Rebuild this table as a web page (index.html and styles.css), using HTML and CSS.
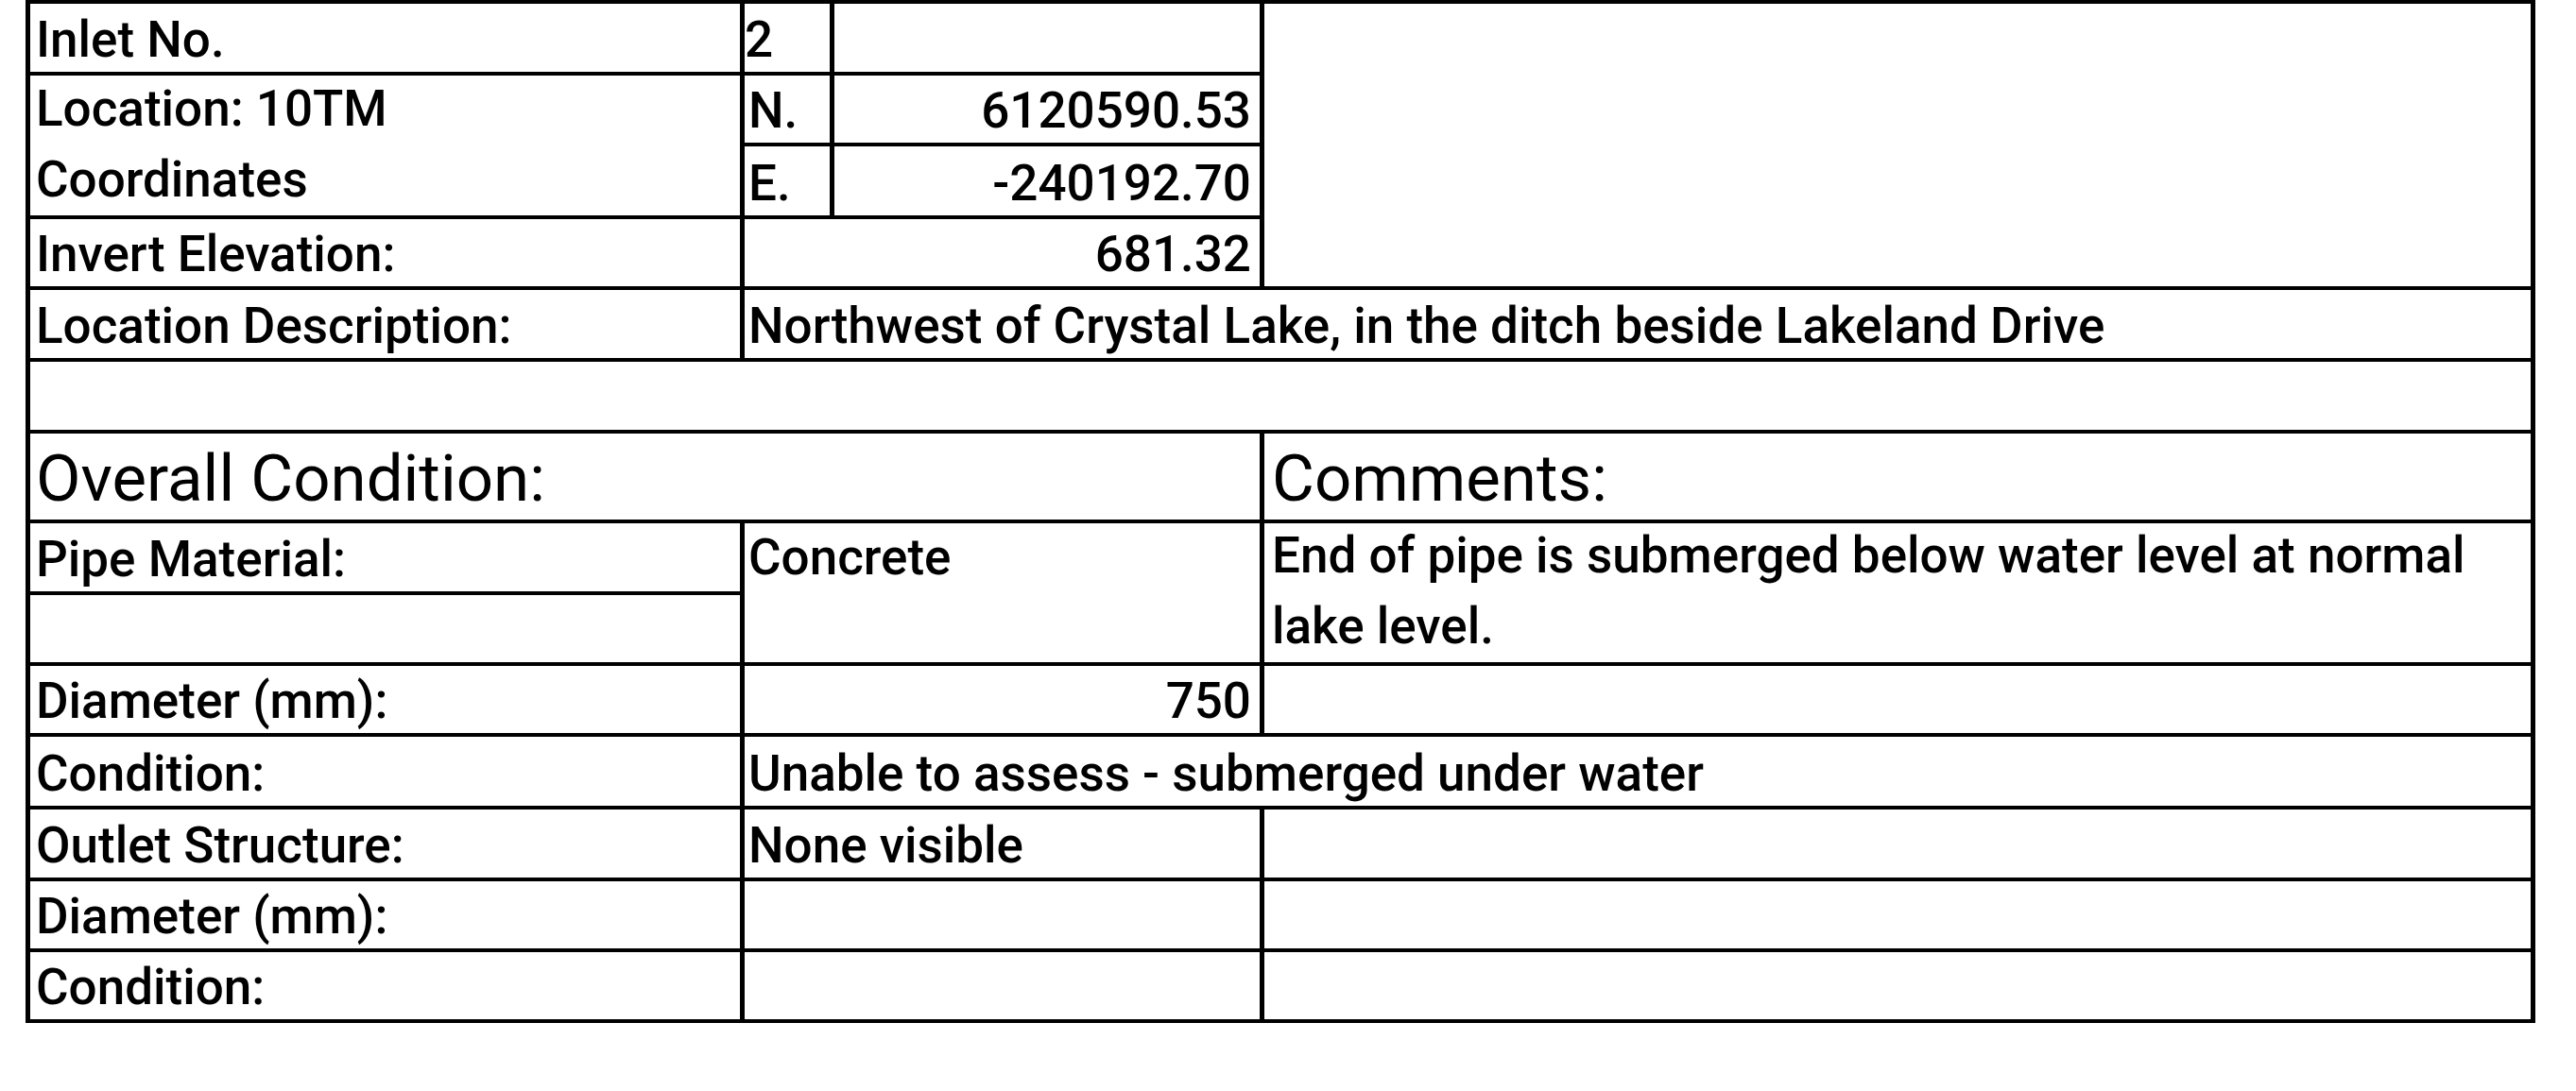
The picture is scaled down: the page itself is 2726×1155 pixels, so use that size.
FILE: index.html
```html
<!DOCTYPE html>
<html lang="en">
<head>
<meta charset="utf-8">
<title>Inlet Inspection</title>
<link rel="stylesheet" href="styles.css">
</head>
<body>
<div class="sheet">
  <div class="cell c1">Inlet No.</div>
  <div class="cell c2 tight">2</div>
  <div class="cell c3"></div>
  <div class="cell c4 rows4"></div>

  <div class="cell c1 rows2 multi">Location: 10TM<br>Coordinates</div>
  <div class="cell c2">N.</div>
  <div class="cell c3 num">6120590.53</div>
  <div class="cell c2">E.</div>
  <div class="cell c3 num">-240192.70</div>

  <div class="cell c1">Invert Elevation:</div>
  <div class="cell c23 num">681.32</div>

  <div class="cell c1">Location Description:</div>
  <div class="cell c24">Northwest of Crystal Lake, in the ditch beside Lakeland Drive</div>

  <div class="cell call"></div>

  <div class="cell c13 big">Overall Condition:</div>
  <div class="cell c4 big">Comments:</div>

  <div class="cell c1">Pipe Material:</div>
  <div class="cell c23 rows2 top">Concrete</div>
  <div class="cell c4 rows2 multi">End of pipe is submerged below water level at normal<br>lake level.</div>
  <div class="cell c1"></div>

  <div class="cell c1">Diameter (mm):</div>
  <div class="cell c23 num">750</div>
  <div class="cell c4"></div>

  <div class="cell c1">Condition:</div>
  <div class="cell c24">Unable to assess - submerged under water</div>

  <div class="cell c1">Outlet Structure:</div>
  <div class="cell c23">None visible</div>
  <div class="cell c4"></div>

  <div class="cell c1">Diameter (mm):</div>
  <div class="cell c23"></div>
  <div class="cell c4"></div>

  <div class="cell c1">Condition:</div>
  <div class="cell c23"></div>
  <div class="cell c4"></div>
</div>
</body>
</html>
```
FILE: styles.css
```css
html, body {
  margin: 0;
  padding: 0;
  background: #ffffff;
}

body {
  font-family: Roboto, "Liberation Sans", sans-serif;
  color: #000000;
}

.sheet {
  display: grid;
  grid-template-columns: 751px 90px 450px 1340px;
  grid-template-rows: 72px 71px 73px 71px 72px 72px 91px 72px 71px 71px 73px 72px 71px 71px;
  column-gap: 5px;
  row-gap: 4px;
  padding: 4px 5px;
  background: #000000;
  width: max-content;
  margin-left: 27px;
}

.cell {
  background: #ffffff;
  display: flex;
  align-items: flex-end;
  font-size: 53px;
  font-weight: 500;
  line-height: 67px;
  white-space: nowrap;
  overflow: hidden;
}

.c1 { grid-column: 1 / 2; padding-left: 6px; }
.c2 { grid-column: 2 / 3; padding-left: 4px; }
.c3 { grid-column: 3 / 4; padding-left: 4px; }
.c4 { grid-column: 4 / 5; padding-left: 8px; }
.c23 { grid-column: 2 / 4; padding-left: 4px; }
.c24 { grid-column: 2 / 5; padding-left: 4px; }
.c13 { grid-column: 1 / 4; padding-left: 6px; }
.call { grid-column: 1 / 5; }

.rows2 { grid-row: span 2; }
.rows4 { grid-row: span 4; }

.tight { padding-left: 0; }

.num {
  justify-content: flex-end;
  padding-right: 9px;
}

.multi {
  line-height: 75px;
}

.top {
  align-items: flex-start;
  padding-top: 3px;
}

.big {
  font-size: 69px;
  font-weight: 400;
  line-height: 80px;
  padding-bottom: 3px;
}
```
